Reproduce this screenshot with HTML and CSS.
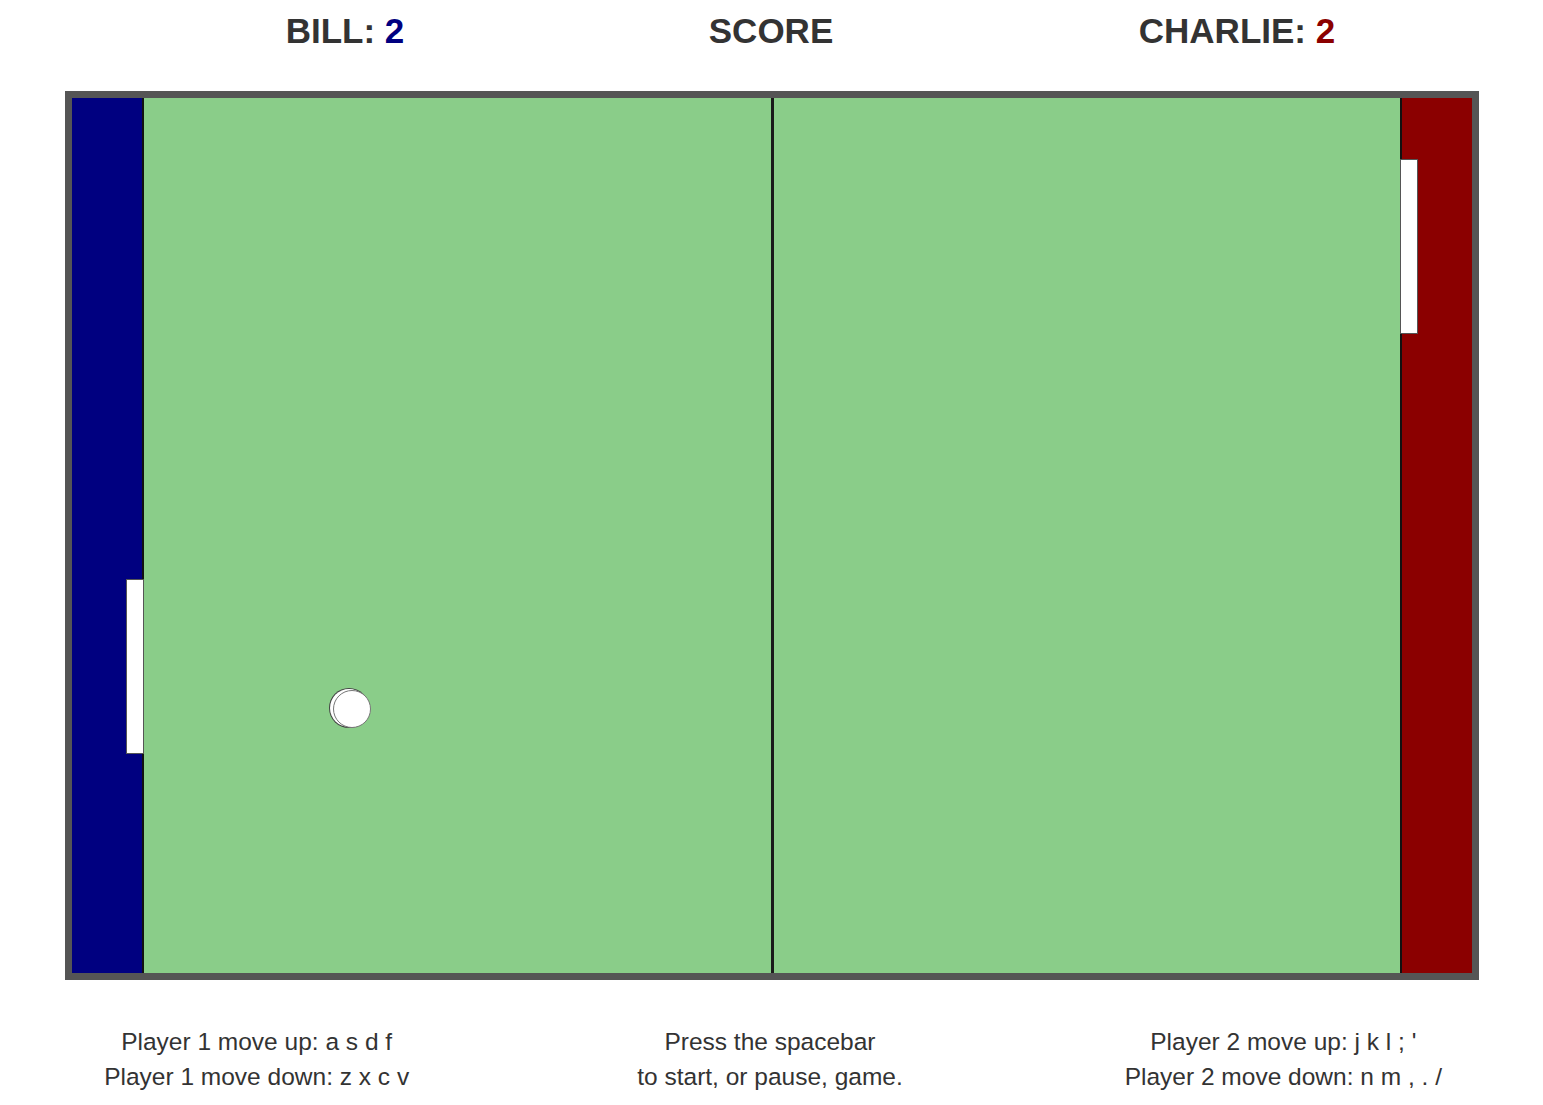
FILE: index.html
```html
<!DOCTYPE html>
<html>
<head>
<meta charset="utf-8">
<title>Pong</title>
<link rel="stylesheet" href="styles.css">
</head>
<body>
<header class="scores">
  <div class="score">BILL: <span class="p1">2</span></div>
  <div class="score">SCORE</div>
  <div class="score">CHARLIE: <span class="p2">2</span></div>
</header>
<main class="board">
  <div class="inner">
    <div class="zone zone-left"></div>
    <div class="field"><div class="net"></div></div>
    <div class="zone zone-right"></div>
    <div class="paddle paddle-left"></div>
    <div class="paddle paddle-right"></div>
    <div class="ball"></div>
  </div>
</main>
<footer class="help">
  <div class="col">Player 1 move up: a s d f<br>Player 1 move down: z x c v</div>
  <div class="col">Press the spacebar<br>to start, or pause, game.</div>
  <div class="col">Player 2 move up: j k l ; '<br>Player 2 move down: n m , . /</div>
</footer>
</body>
</html>
```
FILE: styles.css
```css
html, body {
  margin: 0;
  padding: 0;
  background: #fff;
}
body {
  font-family: "Liberation Sans", Arial, sans-serif;
  color: #333;
  width: 1543px;
}
.scores {
  display: grid;
  grid-template-columns: 200px 652px 280px;
  padding: 11px 0 0 245px;
  height: 40px;
}
.score {
  font-size: 35px;
  line-height: 40px;
  font-weight: bold;
  text-align: center;
  white-space: nowrap;
}
.p1 { color: #000080; }
.p2 { color: #8b0000; }
.board {
  display: block;
  margin: 40px 0 0 65px;
  width: 1400px;
  height: 875px;
  border: 7px solid #555;
}
.inner {
  position: relative;
  display: flex;
  width: 1400px;
  height: 875px;
}
.zone {
  width: 70px;
  flex: none;
}
.zone-left {
  background: #000080;
  border-right: 2px solid #111;
}
.zone-right {
  background: #8b0000;
  border-left: 2px solid #111;
}
.field {
  flex: 1;
  background: #8acd89;
  display: flex;
  justify-content: center;
}
.net {
  width: 3px;
  background: #1a1a1a;
}
.paddle {
  position: absolute;
  width: 16px;
  height: 173px;
  background: #fff;
  border: 1px solid #555;
}
.paddle-left {
  left: 54px;
  top: 481px;
}
.paddle-right {
  left: 1328px;
  top: 61px;
}
.ball {
  position: absolute;
  left: 261px;
  top: 592px;
  width: 36px;
  height: 36px;
  border-radius: 50%;
  background: #fff;
  border: 1px solid #777;
  box-shadow: -3px -1px 0 0 #fff, -3px -1px 0 1px #444;
}
.help {
  display: grid;
  grid-template-columns: repeat(3, 1fr);
  width: 1540px;
  margin-top: 44px;
}
.col {
  font-size: 24.5px;
  line-height: 35px;
  text-align: center;
  color: #333;
}
```
